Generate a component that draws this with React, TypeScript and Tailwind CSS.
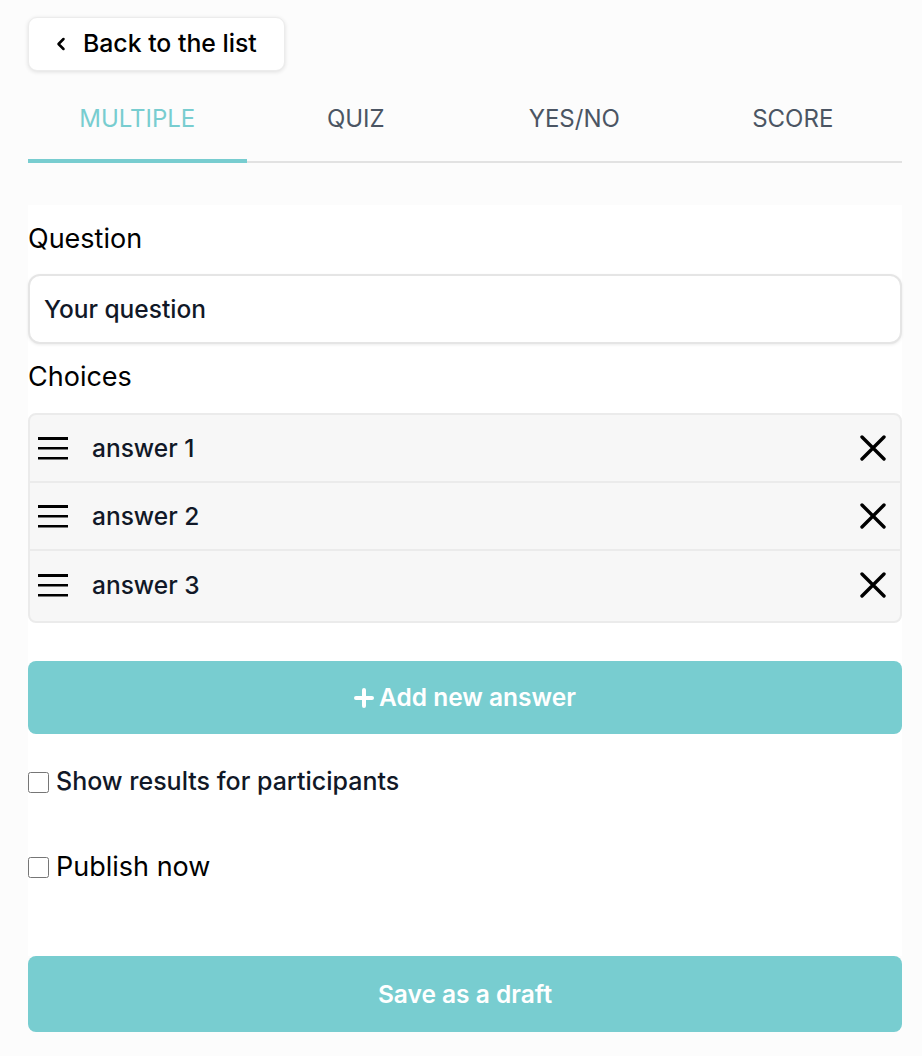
import { ChevronLeft } from "lucide-react"

const tabs = ["MULTIPLE", "QUIZ", "YES/NO", "SCORE"]
const answers = ["answer 1", "answer 2", "answer 3"]

function Burger() {
  return (
    <svg width="30" height="24" viewBox="0 0 30 24" className="shrink-0">
      <rect x="0" y="1" width="30" height="3" fill="#000" />
      <rect x="0" y="11" width="30" height="2.5" fill="#000" />
      <rect x="0" y="21" width="30" height="2.5" fill="#000" />
    </svg>
  )
}

function Cross() {
  return (
    <svg width="26" height="26" viewBox="0 0 26 26" className="shrink-0">
      <path d="M2 2 L24 24 M24 2 L2 24" stroke="#000" strokeWidth="3.4" strokeLinecap="round" />
    </svg>
  )
}

export default function App() {
  return (
    <div className="min-h-[1056px] bg-[#fcfcfc] pl-[28px] pr-[20px] pt-[17px] font-['Inter',sans-serif] text-[#111827]">
      <button className="flex h-[54px] items-center gap-[12px] rounded-[9px] border border-[#ececec] bg-white pl-[22px] pr-[27px] text-[24.8px] font-medium text-black shadow-[0_1px_4px_rgba(0,0,0,0.12)]">
        <ChevronLeft className="h-[20px] w-[20px]" strokeWidth={3} />
        Back to the list
      </button>

      <div className="mt-[9px] flex border-b-2 border-[#e2e2e2]">
        {tabs.map((t, i) => (
          <div
            key={t}
            className={
              i === 0
                ? "-mb-[2px] flex h-[83px] flex-1 items-center justify-center pb-[2px] border-b-4 border-[#78cdd0] text-[24px] text-[#78cdd0]"
                : "flex h-[81px] flex-1 items-center justify-center pb-[4px] text-[24px] text-[#4b5563]"
            }
          >
            {t}
          </div>
        ))}
      </div>

      <div className="mt-[42px] bg-white">
        <div className="pt-[18px] text-[27px] leading-[32px] text-black">Question</div>
        <div className="mt-[19px] flex h-[70px] items-center rounded-[12px] border-2 border-[#e5e5e5] bg-white px-[14px] text-[24.5px] font-medium shadow-[0_1px_3px_rgba(0,0,0,0.08)]">
          Your question
        </div>
        <div className="mt-[17px] text-[27px] leading-[32px] text-black">Choices</div>
        <div className="mt-[20px] overflow-hidden rounded-[8px] border-2 border-[#ebebeb] bg-[#f7f7f7] pb-[2px]">
          {answers.map((a, i) => (
            <div
              key={a}
              className={
                i < answers.length - 1
                  ? "flex h-[68px] items-center border-b-2 border-[#ebebeb] pl-[8px] pr-[14px]"
                  : "flex h-[68px] items-center pl-[8px] pr-[14px]"
              }
            >
              <Burger />
              <span className="ml-[24px] flex-1 text-[24.5px] font-medium">{a}</span>
              <Cross />
            </div>
          ))}
        </div>

        <button className="mt-[38px] flex h-[73px] w-full items-center justify-center gap-[5px] rounded-[8px] bg-[#78cdd0] text-[24.5px] font-semibold text-white">
          <svg width="20" height="20" viewBox="0 0 20 20">
            <path d="M10 2 V18 M2 10 H18" stroke="#fff" strokeWidth="4" strokeLinecap="round" />
          </svg>
          Add new answer
        </button>

        <label className="mt-[33px] flex h-[30px] items-center gap-[7px] text-[25px] font-medium">
          <input type="checkbox" className="h-[21px] w-[21px] rounded-[4px]" />
          Show results for participants
        </label>

        <label className="mt-[54px] flex h-[32px] items-center gap-[7px] text-[27px] text-black">
          <input type="checkbox" className="h-[21px] w-[21px] rounded-[4px]" />
          Publish now
        </label>

        <div className="h-[73px]" />
      </div>

      <button className="flex h-[76px] w-full items-center justify-center rounded-[8px] bg-[#78cdd0] text-[24.5px] font-semibold text-white">
        Save as a draft
      </button>
    </div>
  )
}
